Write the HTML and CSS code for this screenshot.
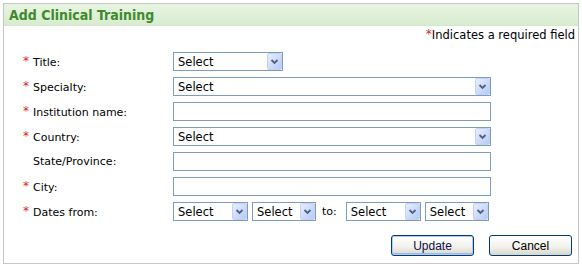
FILE: index.html
```html
<!DOCTYPE html>
<html lang="en">
<head>
  <meta charset="UTF-8" />
  <meta name="viewport" content="width=device-width, initial-scale=1.0"/>
  <title>Add Clinical Training</title>
  <link rel="stylesheet" href="styles.css">
</head>
<body>
  <div class="panel">
    <div class="panel-head">
      <h2>Add Clinical Training</h2>
    </div>

    <p class="req-note"><span class="req">*</span>Indicates a required field</p>

    <div class="form">
      <label for="title"><span class="req">*</span>Title:</label>
      <div><select id="title" class="sel-short"><option>Select</option></select></div>

      <label for="specialty"><span class="req">*</span>Specialty:</label>
      <div><select id="specialty" class="sel-long"><option>Select</option></select></div>

      <label for="institution"><span class="req">*</span>Institution name:</label>
      <div><input type="text" id="institution" /></div>

      <label for="country"><span class="req">*</span>Country:</label>
      <div><select id="country" class="sel-long"><option>Select</option></select></div>

      <label for="state"><span class="req"></span>State/Province:</label>
      <div><input type="text" id="state" /></div>

      <label for="city"><span class="req">*</span>City:</label>
      <div><input type="text" id="city" /></div>

      <label for="from-month"><span class="req">*</span>Dates from:</label>
      <div class="dates">
        <select id="from-month" class="sel-month"><option>Select</option></select>
        <select id="from-year" class="sel-year"><option>Select</option></select>
        <span class="to">to:</span>
        <select id="to-month" class="sel-month"><option>Select</option></select>
        <select id="to-year" class="sel-year"><option>Select</option></select>
      </div>
    </div>

    <div class="actions">
      <button class="btn btn-default">Update</button>
      <button class="btn">Cancel</button>
    </div>
  </div>
</body>
</html>
```

FILE: styles.css
```css
body {
  margin: 3px;
  font-family: "DejaVu Sans", Verdana, sans-serif;
  font-size: 11px;
  color: #000;
}
.panel {
  width: 574px;
  height: 259px;
  border: 1px solid #c6c6c6;
}
.panel-head {
  height: 22px;
  padding-left: 5px;
  display: flex;
  align-items: center;
  background: linear-gradient(#e8f4e2, #d8ecd0);
  border-bottom: 1px solid #d3e8ca;
  box-sizing: border-box;
}
.panel-head h2 {
  margin: 0;
  font-size: 14px;
  font-stretch: condensed;
  font-weight: bold;
  color: #3f8a2d;
}
.req {
  display: inline-block;
  width: 10px;
  color: #d8261b;
  font-size: 12px;
  vertical-align: 1px;
}
.req-note {
  margin: 0;
  padding: 1px 3px 0 0;
  line-height: 14px;
  font-size: 11.5px;
  text-align: right;
}
.req-note .req {
  width: 10px;
}
.form {
  display: grid;
  grid-template-columns: 150px auto;
  row-gap: 6px;
  align-items: center;
  margin-top: 10px;
  padding-left: 19px;
}
.form label {
  display: block;
  line-height: 13px;
}
select, input[type="text"] {
  box-sizing: border-box;
  height: 19px;
  border: 1px solid #7f9db9;
  background-color: #fff;
  font-family: "DejaVu Sans", Tahoma, sans-serif;
  font-size: 11.5px;
  color: #000;
  margin: 0;
  display: block;
}
input[type="text"] {
  width: 318px;
  padding: 0 3px;
}
select {
  appearance: none;
  -webkit-appearance: none;
  border-radius: 0;
  padding: 0 18px 0 4px;
  background-image: url("data:image/svg+xml,%3Csvg xmlns='http://www.w3.org/2000/svg' width='15' height='17'%3E%3Cdefs%3E%3ClinearGradient id='g' x1='0' y1='0' x2='1' y2='1'%3E%3Cstop offset='0' stop-color='%23e9f0fd'/%3E%3Cstop offset='1' stop-color='%23b6c9f3'/%3E%3C/linearGradient%3E%3C/defs%3E%3Crect x='.5' y='.5' width='14' height='16' rx='1.5' fill='url(%23g)' stroke='%23c3d2f6'/%3E%3Cpath d='M4.5 7l3 3 3-3' fill='none' stroke='%234d6185' stroke-width='1.8'/%3E%3C/svg%3E");
  background-repeat: no-repeat;
  background-position: right 0 center;
}
.sel-short { width: 110px; }
.sel-long { width: 318px; }
.sel-month { width: 75px; }
.sel-year { width: 64px; }
.dates {
  display: flex;
  align-items: center;
  gap: 4px;
}
.to {
  margin: 0 5px 0 2px;
}
.actions {
  display: flex;
  justify-content: flex-end;
  gap: 15px;
  margin-top: 14px;
  padding-right: 6px;
}
.btn {
  width: 83px;
  height: 21px;
  padding: 0;
  border: 1px solid #003c74;
  border-radius: 3px;
  background: linear-gradient(#ffffff, #f3f2ec 55%, #d9d5ca);
  font-family: "Liberation Sans", Arial, sans-serif;
  font-size: 12px;
  color: #000;
  cursor: pointer;
}
.btn-default {
  color: #10104a;
  box-shadow: inset 0 0 0 1px #b6cbf2, inset 0 -1px 0 1px #9db7ea;
}
```
